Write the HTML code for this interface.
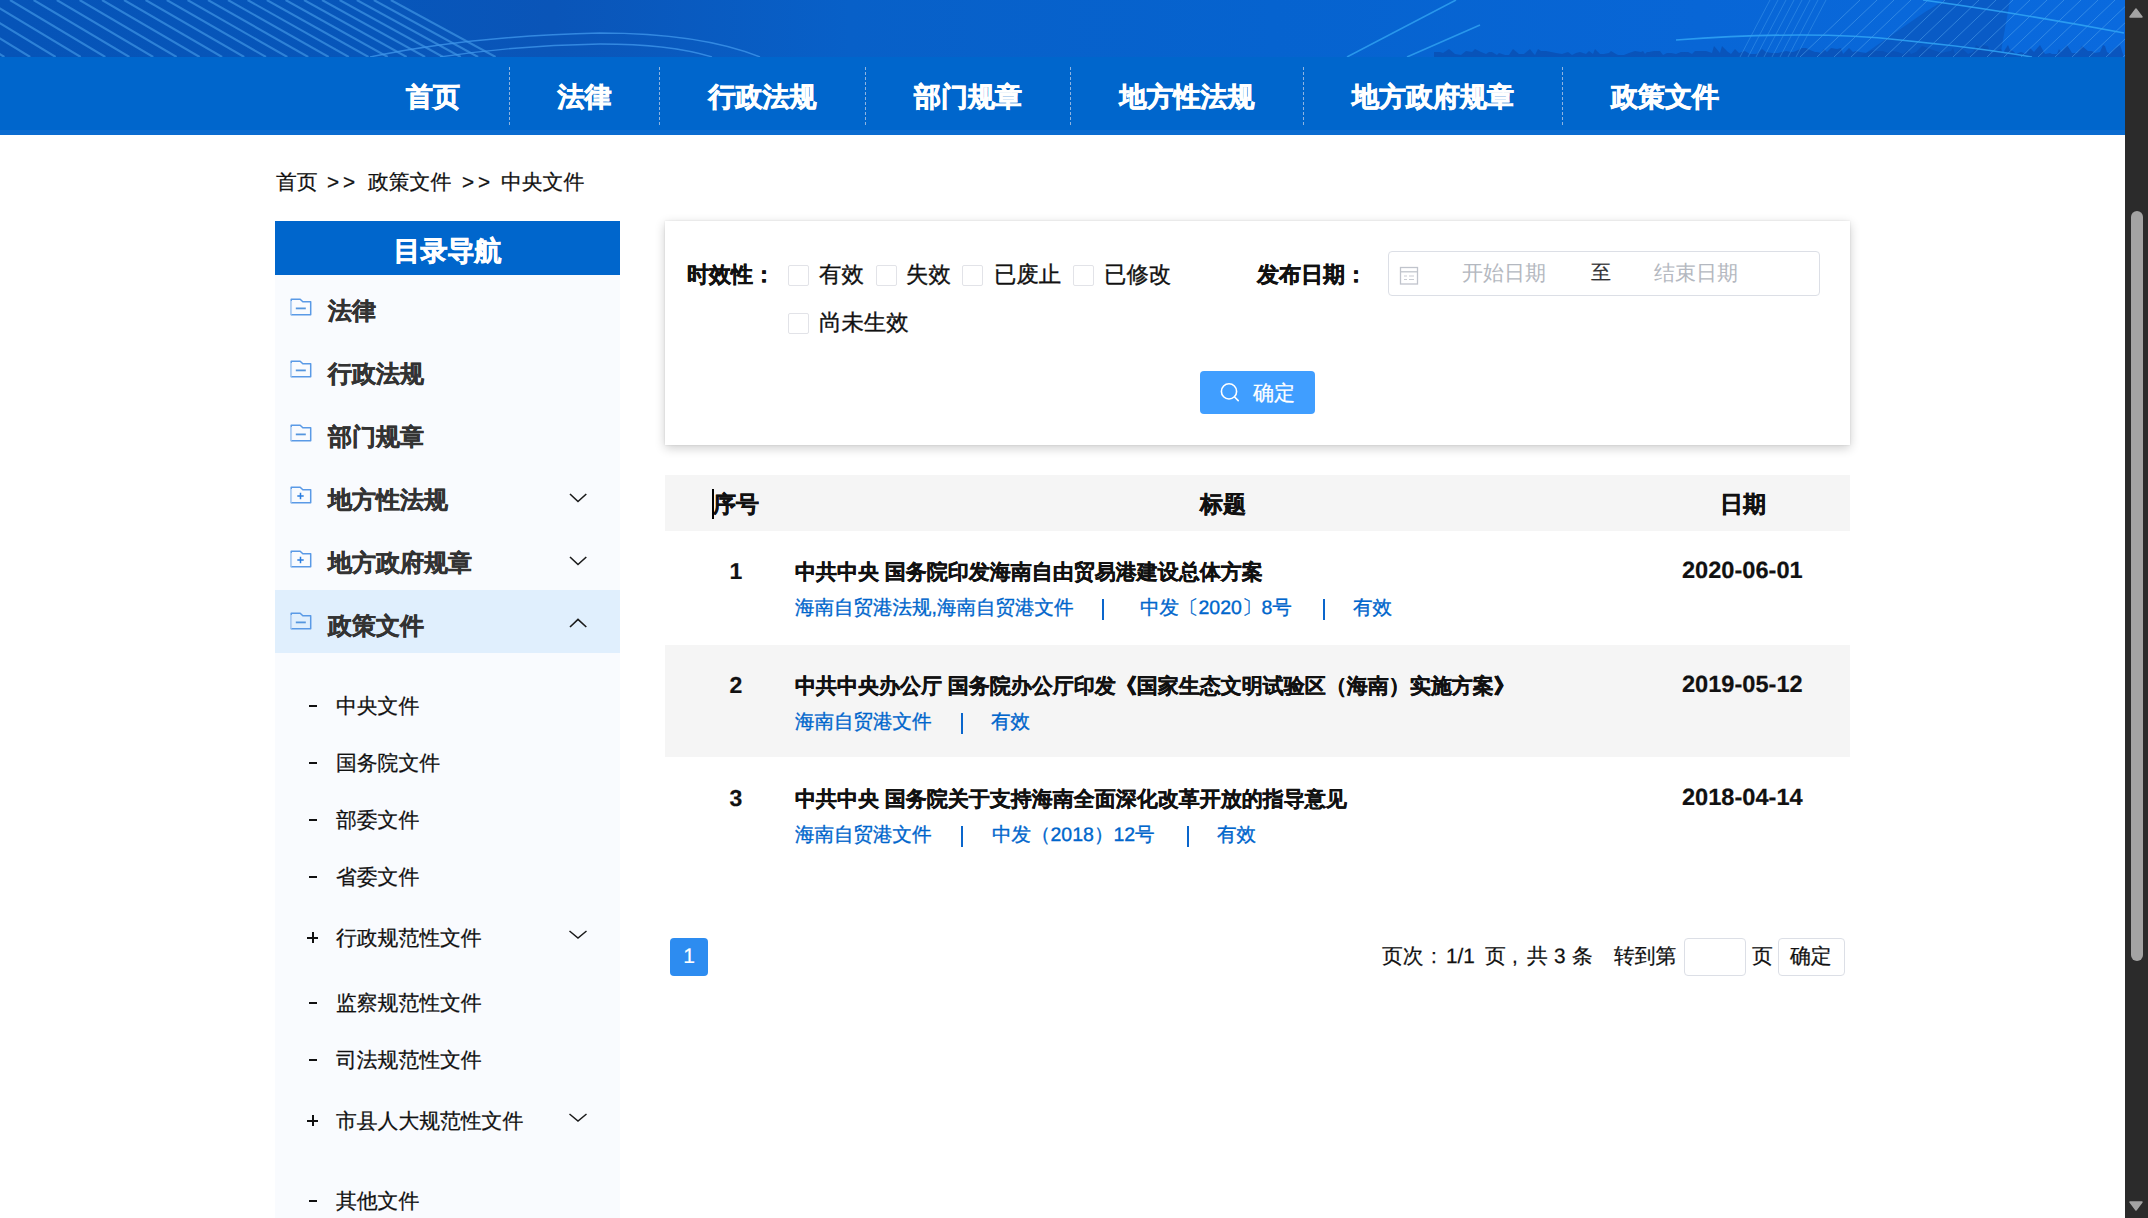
<!DOCTYPE html>
<html><head><meta charset="utf-8">
<style>
*{margin:0;padding:0;box-sizing:border-box}
html,body{width:2148px;height:1218px;overflow:hidden;background:#fff}
body{font-family:"Liberation Sans",sans-serif;color:#000;position:relative;text-rendering:geometricPrecision}
.a{position:absolute}
.t{position:absolute;white-space:nowrap}
#banner{left:0;top:0;width:2125px;height:57px;overflow:hidden}
#nav{left:0;top:57px;width:2125px;height:78px;background:#0066cc;border-bottom:5px solid #0a6bd0}
.nv{position:absolute;top:0;height:77px;line-height:81px;color:#fff;font-weight:bold;font-size:27px;text-align:center;white-space:nowrap;-webkit-text-stroke:0.7px #fff}
.dv{position:absolute;top:10px;height:58px;width:0;border-left:1px dashed #8fb4e0}
#scroll{left:2125px;top:0;width:23px;height:1218px;background:#2b2b2b}
#side{left:275px;top:221px;width:345px;height:997px;background:#f9fbfe}
#sidehd{left:275px;top:221px;width:345px;height:54px;background:#0066cc;color:#fff;font-size:27px;font-weight:bold;text-align:center;line-height:60px;-webkit-text-stroke:0.6px #fff}
.si{font-size:24px;line-height:24px;font-weight:bold;color:#333;-webkit-text-stroke:0.4px #333}
.ss{font-size:20.8px;line-height:20px;color:#111;-webkit-text-stroke:0.25px #111}
.bc{font-size:20.8px;line-height:20px;color:#111;-webkit-text-stroke:0.25px #111}
#panel{left:665px;top:221px;width:1185px;height:224px;background:#fff;box-shadow:0 3px 10px rgba(0,0,0,.2),0 0 2px rgba(0,0,0,.1)}
.lb{font-size:22px;line-height:22px;font-weight:bold;color:#111;-webkit-text-stroke:0.4px #111}
.ck{position:absolute;width:21px;height:21px;border:1px solid #e2e3e8;border-radius:2px;background:#fff}
.cl{font-size:22.4px;line-height:22px;color:#111;-webkit-text-stroke:0.35px #111}
.th{font-size:23px;line-height:23px;font-weight:bold;color:#111;-webkit-text-stroke:0.4px #111}
.tt{font-size:21px;line-height:21px;font-weight:bold;color:#111;-webkit-text-stroke:0.3px #111}
.dt{font-size:23.6px;line-height:23px;font-weight:bold;color:#111;-webkit-text-stroke:0.2px #111}
.nm{font-size:23px;line-height:23px;font-weight:bold;color:#111;-webkit-text-stroke:0.2px #111}
.sub{font-size:19.5px;line-height:20px;color:#0066cc;-webkit-text-stroke:0.35px #0066cc}
.pg{font-size:20.8px;line-height:20px;color:#111;-webkit-text-stroke:0.25px #111}
.ph{font-size:21px;line-height:20px;color:#b4b8c0}
</style></head><body>
<div id="banner" class="a"><svg width="2125" height="57" style="position:absolute;left:0;top:0" fill="none"><defs><linearGradient id="bg" x1="0" x2="1" y1="0" y2="0"><stop offset="0" stop-color="#0654b8"/><stop offset="0.18" stop-color="#0756ba"/><stop offset="0.26" stop-color="#0a55b8"/><stop offset="0.4" stop-color="#0860c8"/><stop offset="0.6" stop-color="#0663cf"/><stop offset="0.8" stop-color="#0866d6"/><stop offset="1" stop-color="#0a6ade"/></linearGradient></defs><rect width="2125" height="57" fill="url(#bg)"/><g stroke="#3589dc" stroke-opacity=".85" stroke-width="2.1"><path d="M-140.0 0 L-48.5 57"/><path d="M-114.0 0 L-21.9 57"/><path d="M-88.4 0 L4.4 57"/><path d="M-63.2 0 L30.2 57"/><path d="M-38.4 0 L55.6 57"/><path d="M-14.0 0 L80.7 57"/><path d="M10.0 0 L105.3 57"/><path d="M33.6 0 L129.4 57"/><path d="M56.8 0 L153.2 57"/><path d="M79.6 0 L176.6 57"/><path d="M102.0 0 L199.6 57"/><path d="M124.0 0 L222.1 57"/><path d="M145.6 0 L244.2 57"/><path d="M166.8 0 L266.0 57"/><path d="M187.6 0 L287.3 57"/><path d="M208.0 0 L308.2 57"/><path d="M228.0 0 L328.7 57"/><path d="M247.6 0 L348.8 57"/><path d="M266.8 0 L368.5 57"/><path d="M285.6 0 L387.7 57"/><path d="M304.0 0 L406.6 57"/><path d="M322.0 0 L425.1 57"/><path d="M339.6 0 L443.1 57"/><path d="M356.8 0 L460.7 57"/><path d="M373.8 0 L478.1 57"/><path d="M390.8 0 L495.6 57"/></g><g stroke="#3d95ea" stroke-opacity=".8" stroke-width="1.4"><path d="M370 57 Q470 36 600 33 Q700 33 760 57"/><path d="M440 57 Q520 45 600 44 Q670 44 712 57"/></g><g stroke="#2fa0f0" stroke-opacity=".85" stroke-width="1.6"><path d="M1347 57 L1456 0"/><path d="M1407 57 L1480 25"/></g><path d="M1434 57 L1434 52 L1440 52 L1443 53 L1449 49 L1455 54 L1461 55 L1466 51 L1472 52 L1475 49 L1481 52 L1486 54 L1489 52 L1492 52 L1497 55 L1499 53 L1505 55 L1509 55 L1513 49 L1519 54 L1524 54 L1530 49 L1533 53 L1535 55 L1538 49 L1541 51 L1546 51 L1551 52 L1556 53 L1562 54 L1568 52 L1572 55 L1576 53 L1580 52 L1586 54 L1589 51 L1593 54 L1595 49 L1600 54 L1604 54 L1609 53 L1611 51 L1616 54 L1618 55 L1624 55 L1629 53 L1635 51 L1641 52 L1643 51 L1645 54 L1647 52 L1649 52 L1654 51 L1660 51 L1663 55 L1667 53 L1671 53 L1676 54 L1681 52 L1686 52 L1688 52 L1692 54 L1695 51 L1700 51 L1706 51 L1712 53 L1714 46 L1720 53 L1722 46 L1728 52 L1731 54 L1735 49 L1739 53 L1745 51 L1750 54 L1756 54 L1758 53 L1762 49 L1766 52 L1772 53 L1775 53 L1778 53 L1782 52 L1786 51 L1791 52 L1793 52 L1796 51 L1802 48 L1806 48 L1810 50 L1815 52 L1817 52 L1821 53 L1824 49 L1827 52 L1831 48 L1837 49 L1841 48 L1843 54 L1849 48 L1853 52 L1856 51 L1860 52 L1866 53 L1872 50 L1877 51 L1883 51 L1888 53 L1893 51 L1898 52 L1903 54 L1908 50 L1911 54 L1916 52 L1922 46 L1928 48 L1930 49 L1936 51 L1942 53 L1945 52 L1951 51 L1953 48 L1955 54 L1961 48 L1966 52 L1968 54 L1973 52 L1976 45 L1980 48 L1982 45 L1988 46 L1990 52 L1992 53 L1995 51 L2001 49 L2003 53 L2006 48 L2008 45 L2010 50 L2013 51 L2016 54 L2021 52 L2026 54 L2030 48 L2034 52 L2040 45 L2045 54 L2050 53 L2052 54 L2055 54 L2057 54 L2059 49 L2061 52 L2067 45 L2072 53 L2075 53 L2077 53 L2082 46 L2088 51 L2092 51 L2095 53 L2100 52 L2103 45 L2105 46 L2107 52 L2110 54 L2114 49 L2120 45 L2124 57 Z" fill="#0a48a8" fill-opacity=".6"/><path d="M1860 57 L1925 12 L1945 0 L2010 0 L2000 57 Z" fill="#0a50b4" fill-opacity=".55"/><g stroke="#48a0ee" stroke-opacity=".45" stroke-width="1"><path d="M1740 57 L1770 0"/><path d="M1748 57 L1778 0"/><path d="M1756 57 L1786 0"/><path d="M1764 57 L1794 0"/><path d="M1772 57 L1802 0"/><path d="M1780 57 L1810 0"/><path d="M1788 57 L1818 0"/><path d="M1796 57 L1826 0"/></g><g stroke="#5aaaf0" stroke-opacity=".5" stroke-width="1"><path d="M1800 57 L1860 0"/><path d="M1817 57 L1877 0"/><path d="M1834 57 L1894 0"/><path d="M1851 57 L1911 0"/><path d="M1868 57 L1928 0"/><path d="M1885 57 L1945 0"/><path d="M1902 57 L1962 0"/><path d="M1919 57 L1979 0"/><path d="M1936 57 L1996 0"/><path d="M1953 57 L2013 0"/><path d="M1970 57 L2030 0"/><path d="M1987 57 L2047 0"/><path d="M2004 57 L2064 0"/><path d="M2021 57 L2081 0"/><path d="M2038 57 L2098 0"/><path d="M2055 57 L2115 0"/><path d="M2072 57 L2132 0"/><path d="M2089 57 L2149 0"/><path d="M2106 57 L2166 0"/><path d="M2123 57 L2183 0"/><path d="M2140 57 L2200 0"/><path d="M2157 57 L2217 0"/></g><g stroke="#30a4f4" stroke-opacity=".85" stroke-width="1.6"><path d="M1676 40 Q1814 30 1900 40 Q1980 48 2032 57"/><path d="M1923 0 Q2030 15 2124 33"/></g></svg></div>
<div id="nav" class="a">
<div class="nv" style="left:357px;width:152px">首页</div>
<div class="dv" style="left:509px"></div>
<div class="nv" style="left:510px;width:149px">法律</div>
<div class="dv" style="left:659px"></div>
<div class="nv" style="left:660px;width:205px">行政法规</div>
<div class="dv" style="left:865px"></div>
<div class="nv" style="left:866px;width:204px">部门规章</div>
<div class="dv" style="left:1070px"></div>
<div class="nv" style="left:1071px;width:232px">地方性法规</div>
<div class="dv" style="left:1303px"></div>
<div class="nv" style="left:1304px;width:258px">地方政府规章</div>
<div class="dv" style="left:1562px"></div>
<div class="nv" style="left:1563px;width:204px">政策文件</div>
</div>
<div class="t bc" style="left:276px;top:173px">首页</div>
<div class="t bc" style="left:327px;top:173px">&gt;</div>
<div class="t bc" style="left:343px;top:173px">&gt;</div>
<div class="t bc" style="left:462px;top:173px">&gt;</div>
<div class="t bc" style="left:478px;top:173px">&gt;</div>
<div class="t bc" style="left:368px;top:173px">政策文件</div>
<div class="t bc" style="left:501px;top:173px">中央文件</div>
<div id="side" class="a"></div>
<div class="a" style="left:275px;top:590px;width:345px;height:63px;background:#e0effd"></div>
<div id="sidehd" class="a">目录导航</div>
<svg class="a" style="left:290px;top:298px" width="22" height="18" viewBox="0 0 22 18" fill="none"><path d="M1.2 1.2h9l2.6 2.6h7.9v12.9H1.2z" stroke="#5a9ae6" stroke-width="1.5" stroke-linejoin="round"/><path d="M1.2 3v13.5" stroke="#b8d3f3" stroke-width="1.7"/><path d="M5.8 10.4h10" stroke="#5596de" stroke-width="1.8"/></svg>
<div class="t si" style="left:328px;top:299.5px">法律</div>
<svg class="a" style="left:290px;top:360px" width="22" height="18" viewBox="0 0 22 18" fill="none"><path d="M1.2 1.2h9l2.6 2.6h7.9v12.9H1.2z" stroke="#5a9ae6" stroke-width="1.5" stroke-linejoin="round"/><path d="M1.2 3v13.5" stroke="#b8d3f3" stroke-width="1.7"/><path d="M5.8 10.4h10" stroke="#5596de" stroke-width="1.8"/></svg>
<div class="t si" style="left:328px;top:362.5px">行政法规</div>
<svg class="a" style="left:290px;top:424px" width="22" height="18" viewBox="0 0 22 18" fill="none"><path d="M1.2 1.2h9l2.6 2.6h7.9v12.9H1.2z" stroke="#5a9ae6" stroke-width="1.5" stroke-linejoin="round"/><path d="M1.2 3v13.5" stroke="#b8d3f3" stroke-width="1.7"/><path d="M5.8 10.4h10" stroke="#5596de" stroke-width="1.8"/></svg>
<div class="t si" style="left:328px;top:425.5px">部门规章</div>
<svg class="a" style="left:290px;top:486px" width="22" height="18" viewBox="0 0 22 18" fill="none"><path d="M1.2 1.2h9l2.6 2.6h7.9v12.9H1.2z" stroke="#5a9ae6" stroke-width="1.5" stroke-linejoin="round"/><path d="M1.2 3v13.5" stroke="#b8d3f3" stroke-width="1.7"/><path d="M7.3 10h6.4M10.5 6.8v6.4" stroke="#2a7de0" stroke-width="1.5"/></svg>
<div class="t si" style="left:328px;top:488.5px">地方性法规</div>
<svg class="a" style="left:566px;top:489.5px" width="24" height="16" viewBox="0 0 24 16" fill="none"><path d="M4 4L12 11.5L20.3 4" stroke="#1a1a1a" stroke-width="1.6"/></svg>
<svg class="a" style="left:290px;top:550px" width="22" height="18" viewBox="0 0 22 18" fill="none"><path d="M1.2 1.2h9l2.6 2.6h7.9v12.9H1.2z" stroke="#5a9ae6" stroke-width="1.5" stroke-linejoin="round"/><path d="M1.2 3v13.5" stroke="#b8d3f3" stroke-width="1.7"/><path d="M7.3 10h6.4M10.5 6.8v6.4" stroke="#2a7de0" stroke-width="1.5"/></svg>
<div class="t si" style="left:328px;top:551.5px">地方政府规章</div>
<svg class="a" style="left:566px;top:552.5px" width="24" height="16" viewBox="0 0 24 16" fill="none"><path d="M4 4L12 11.5L20.3 4" stroke="#1a1a1a" stroke-width="1.6"/></svg>
<svg class="a" style="left:290px;top:612px" width="22" height="18" viewBox="0 0 22 18" fill="none"><path d="M1.2 1.2h9l2.6 2.6h7.9v12.9H1.2z" stroke="#5a9ae6" stroke-width="1.5" stroke-linejoin="round"/><path d="M1.2 3v13.5" stroke="#b8d3f3" stroke-width="1.7"/><path d="M5.8 10.4h10" stroke="#5596de" stroke-width="1.8"/></svg>
<div class="t si" style="left:328px;top:614.5px">政策文件</div>
<svg class="a" style="left:566px;top:615.5px" width="24" height="16" viewBox="0 0 24 16" fill="none"><path d="M4 11L12 3.3L20.3 11" stroke="#1a1a1a" stroke-width="1.6"/></svg>
<div class="a" style="left:309px;top:705px;width:8px;height:2px;background:#111"></div>
<div class="t ss" style="left:336px;top:697px">中央文件</div>
<div class="a" style="left:309px;top:762px;width:8px;height:2px;background:#111"></div>
<div class="t ss" style="left:336px;top:754px">国务院文件</div>
<div class="a" style="left:309px;top:819px;width:8px;height:2px;background:#111"></div>
<div class="t ss" style="left:336px;top:811px">部委文件</div>
<div class="a" style="left:309px;top:876px;width:8px;height:2px;background:#111"></div>
<div class="t ss" style="left:336px;top:868px">省委文件</div>
<div class="a" style="left:307px;top:936.5px;width:11px;height:2px;background:#111"></div><div class="a" style="left:311.5px;top:932px;width:2px;height:11px;background:#111"></div>
<div class="t ss" style="left:336px;top:929px">行政规范性文件</div>
<svg class="a" style="left:566px;top:925px" width="24" height="16" viewBox="0 0 24 16" fill="none"><path d="M3.5 6L12 13L20.5 6" stroke="#1a1a1a" stroke-width="1.5"/></svg>
<div class="a" style="left:309px;top:1002px;width:8px;height:2px;background:#111"></div>
<div class="t ss" style="left:336px;top:994px">监察规范性文件</div>
<div class="a" style="left:309px;top:1059px;width:8px;height:2px;background:#111"></div>
<div class="t ss" style="left:336px;top:1051px">司法规范性文件</div>
<div class="a" style="left:307px;top:1119.5px;width:11px;height:2px;background:#111"></div><div class="a" style="left:311.5px;top:1115px;width:2px;height:11px;background:#111"></div>
<div class="t ss" style="left:336px;top:1112px">市县人大规范性文件</div>
<svg class="a" style="left:566px;top:1108px" width="24" height="16" viewBox="0 0 24 16" fill="none"><path d="M3.5 6L12 13L20.5 6" stroke="#1a1a1a" stroke-width="1.5"/></svg>
<div class="a" style="left:309px;top:1200px;width:8px;height:2px;background:#111"></div>
<div class="t ss" style="left:336px;top:1192px">其他文件</div>
<div id="panel" class="a"></div>
<div class="t lb" style="left:687px;top:264px">时效性：</div>
<div class="ck" style="left:788px;top:265px"></div><div class="t cl" style="left:819px;top:264px">有效</div>
<div class="ck" style="left:876px;top:265px"></div><div class="t cl" style="left:906px;top:264px">失效</div>
<div class="ck" style="left:962px;top:265px"></div><div class="t cl" style="left:994px;top:264px">已废止</div>
<div class="ck" style="left:1073px;top:265px"></div><div class="t cl" style="left:1104px;top:264px">已修改</div>
<div class="ck" style="left:788px;top:313px"></div><div class="t cl" style="left:819px;top:312px">尚未生效</div>
<div class="t lb" style="left:1257px;top:264px">发布日期：</div>
<div class="a" style="left:1388px;top:251px;width:432px;height:45px;border:1px solid #dcdfe6;border-radius:4px;background:#fff"></div>
<svg class="a" style="left:1398px;top:265px" width="22" height="22" viewBox="0 0 22 22" fill="none"><rect x="2.5" y="2.5" width="17" height="16.5" stroke="#c0c4cc" stroke-width="1.3"/><path d="M2.5 6.8h17" stroke="#c0c4cc" stroke-width="1.3"/><path d="M6 11h3M11 11h5M6 14.5h3M11 14.5h5" stroke="#c9ccd3" stroke-width="1.1"/></svg>
<div class="t ph" style="left:1462px;top:264px">开始日期</div>
<div class="t" style="left:1591px;top:263px;font-size:20px;line-height:20px;color:#303133;-webkit-text-stroke:0.2px #303133">至</div>
<div class="t ph" style="left:1654px;top:264px">结束日期</div>
<div class="a" style="left:1200px;top:371px;width:115px;height:43px;border-radius:4px;background:#409eff"></div>
<svg class="a" style="left:1216px;top:379px" width="26" height="26" viewBox="0 0 26 26" fill="none"><circle cx="13" cy="12.4" r="7.6" stroke="#fff" stroke-width="1.6"/><path d="M18.6 18L22.2 21.6" stroke="#fff" stroke-width="1.6" stroke-linecap="round"/></svg>
<div class="t" style="left:1253px;top:384px;font-size:21px;line-height:20px;color:#fff;-webkit-text-stroke:0.2px #fff">确定</div>
<div class="a" style="left:665px;top:475px;width:1185px;height:56px;background:#f5f5f5"></div>
<div class="t th" style="left:713px;top:493px">序号</div>
<div class="a" style="left:712px;top:489px;width:2px;height:30px;background:#000"></div>
<div class="t th" style="left:1200px;top:493px">标题</div>
<div class="t th" style="left:1720px;top:493px">日期</div>
<div class="a" style="left:665px;top:645px;width:1185px;height:112px;background:#f5f5f5"></div>
<div class="t nm" style="left:716px;top:559.5px;width:40px;text-align:center">1</div>
<div class="t tt" style="left:795px;top:562px">中共中央 国务院印发海南自由贸易港建设总体方案</div>
<div class="t dt" style="left:1682px;top:559.5px">2020-06-01</div>
<div class="t sub" style="left:795px;top:598px">海南自贸港法规,海南自贸港文件</div>
<div class="a" style="left:1102px;top:598.5px;width:2px;height:21px;background:#0a66cc"></div>
<div class="t sub" style="left:1140px;top:598px">中发〔2020〕8号</div>
<div class="a" style="left:1323px;top:598.5px;width:2px;height:21px;background:#0a66cc"></div>
<div class="t sub" style="left:1353px;top:598px">有效</div>
<div class="t nm" style="left:716px;top:673.5px;width:40px;text-align:center">2</div>
<div class="t tt" style="left:795px;top:676px">中共中央办公厅 国务院办公厅印发《国家生态文明试验区（海南）实施方案》</div>
<div class="t dt" style="left:1682px;top:673.5px">2019-05-12</div>
<div class="t sub" style="left:795px;top:712px">海南自贸港文件</div>
<div class="a" style="left:961px;top:712.5px;width:2px;height:21px;background:#0a66cc"></div>
<div class="t sub" style="left:991px;top:712px">有效</div>
<div class="t nm" style="left:716px;top:786.5px;width:40px;text-align:center">3</div>
<div class="t tt" style="left:795px;top:789px">中共中央 国务院关于支持海南全面深化改革开放的指导意见</div>
<div class="t dt" style="left:1682px;top:786.5px">2018-04-14</div>
<div class="t sub" style="left:795px;top:825px">海南自贸港文件</div>
<div class="a" style="left:961px;top:825.5px;width:2px;height:21px;background:#0a66cc"></div>
<div class="t sub" style="left:992px;top:825px">中发（2018）12号</div>
<div class="a" style="left:1187px;top:825.5px;width:2px;height:21px;background:#0a66cc"></div>
<div class="t sub" style="left:1217px;top:825px">有效</div>
<div class="a" style="left:670px;top:938px;width:38px;height:38px;border-radius:4px;background:#2d8cf0;color:#fff;font-size:21px;line-height:38px;text-align:center;-webkit-text-stroke:0.2px #fff">1</div>
<div class="t pg" style="left:1382px;top:947px">页次</div>
<div class="t pg" style="left:1431px;top:947px">:</div>
<div class="t pg" style="left:1446px;top:947px">1/1</div>
<div class="t pg" style="left:1485px;top:947px">页</div>
<div class="t pg" style="left:1512px;top:947px">,</div>
<div class="t pg" style="left:1527px;top:947px">共</div>
<div class="t pg" style="left:1554px;top:947px">3</div>
<div class="t pg" style="left:1572px;top:947px">条</div>
<div class="t pg" style="left:1614px;top:947px">转到第</div>
<div class="t pg" style="left:1752px;top:947px">页</div>
<div class="a" style="left:1684px;top:938px;width:62px;height:38px;border:1px solid #dcdfe6;border-radius:4px;background:#fff"></div>
<div class="a" style="left:1778px;top:938px;width:67px;height:38px;border:1px solid #dcdfe6;border-radius:4px;background:#fff"></div>
<div class="t pg" style="left:1790px;top:947px">确定</div>
<div id="scroll" class="a"></div>
<div class="a" style="left:2131px;top:211px;width:12px;height:750px;border-radius:6px;background:#a3a3a3"></div>
<svg class="a" style="left:2127px;top:4px" width="18" height="16" viewBox="0 0 18 16"><path d="M3 13L9 5L15 13Z" fill="#a3a3a3" stroke="#a3a3a3" stroke-linejoin="round" stroke-width="1.5"/></svg>
<svg class="a" style="left:2127px;top:1199px" width="18" height="16" viewBox="0 0 18 16"><path d="M3 3L9 11L15 3Z" fill="#a3a3a3" stroke="#a3a3a3" stroke-linejoin="round" stroke-width="1.5"/></svg>
</body></html>
